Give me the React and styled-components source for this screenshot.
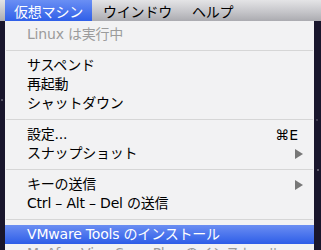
import styled, { createGlobalStyle } from "styled-components";

const GlobalStyle = createGlobalStyle`
  html, body {
    margin: 0;
    padding: 0;
    background: #19162c;
  }
`;

const menuBarItems = [
  { label: "仮想マシン", active: true },
  { label: "ウインドウ" },
  { label: "ヘルプ" },
];

const menu = [
  { label: "Linux は実行中", disabled: true },
  { sep: true },
  { label: "サスペンド" },
  { label: "再起動" },
  { label: "シャットダウン" },
  { sep: true },
  { label: "設定...", shortcut: "⌘E" },
  { label: "スナップショット", submenu: true },
  { sep: true },
  { label: "キーの送信", submenu: true },
  { label: "Ctrl – Alt – Del の送信" },
  { sep: true },
  { label: "VMware Tools のインストール", selected: true },
  { label: "McAfee VirusScan Plus のインストール", disabled: true },
];

export default function App() {
  return (
    <>
      <GlobalStyle />
      <Desktop>
        <MenuBar>
          {menuBarItems.map((item) => (
            <BarItem key={item.label} $active={item.active}>
              {item.label}
            </BarItem>
          ))}
        </MenuBar>
        <Panel>
          {menu.map((item, i) =>
            item.sep ? (
              <Separator key={i} />
            ) : (
              <Row key={i} $disabled={item.disabled} $selected={item.selected}>
                <Label>{item.label}</Label>
                {item.shortcut && <Shortcut>{item.shortcut}</Shortcut>}
                {item.submenu && <Arrow />}
              </Row>
            )
          )}
        </Panel>
      </Desktop>
    </>
  );
}

const Desktop = styled.div`
  width: 321px;
  height: 250px;
  overflow: hidden;
  display: flex;
  flex-direction: column;
  background-color: #19162c;
  background-image: radial-gradient(circle at 2px 100px, rgba(255, 255, 255, 0.5) 0, transparent 1.5px),
    radial-gradient(circle at 318px 170px, rgba(255, 255, 255, 0.55) 0, transparent 1.5px),
    radial-gradient(circle at 317px 120px, rgba(255, 255, 255, 0.3) 0, transparent 1.5px);
  font-family: "DejaVu Sans", "Noto Sans CJK JP", sans-serif;
  font-size: 14px;
`;

const MenuBar = styled.div`
  height: 21px;
  flex: none;
  display: flex;
  padding-left: 5px;
  background: linear-gradient(#e4e4e6, #c6c6ca 55%, #ababb0);
`;

const BarItem = styled.div`
  display: flex;
  align-items: center;
  padding: 0 9px;
  margin-right: 2px;
  letter-spacing: -0.2px;
  color: ${(p) => (p.$active ? "#fff" : "#000")};
  background: ${(p) => (p.$active ? "linear-gradient(#6a8ff4, #2f5fe8)" : "transparent")};
`;

const Panel = styled.div`
  margin: 0 7px 0 5px;
  padding-top: 4px;
  background: #f2f2f3;
  display: flex;
  flex-direction: column;
  flex: none;
`;

const Row = styled.div`
  height: 19px;
  display: flex;
  align-items: center;
  padding: 0 11px 0 22px;
  letter-spacing: -0.2px;
  color: ${(p) => (p.$selected ? "#fff" : p.$disabled ? "#9b9b9b" : "#000")};
  background: ${(p) => (p.$selected ? "linear-gradient(#6b8ef2, #2d5de8)" : "transparent")};
`;

const Label = styled.span`
  flex: 1;
  white-space: nowrap;
  line-height: 19px;
`;

const Shortcut = styled.span`
  margin-right: 5px;
  letter-spacing: 0;
`;

const Arrow = styled.span`
  width: 0;
  height: 0;
  border-top: 5px solid transparent;
  border-bottom: 5px solid transparent;
  border-left: 8px solid #777;
`;

const Separator = styled.div`
  height: 12px;
  display: flex;
  align-items: center;
  padding: 0 1px;

  &::after {
    content: "";
    flex: 1;
    height: 1px;
    background: #d6d6d6;
  }
`;
